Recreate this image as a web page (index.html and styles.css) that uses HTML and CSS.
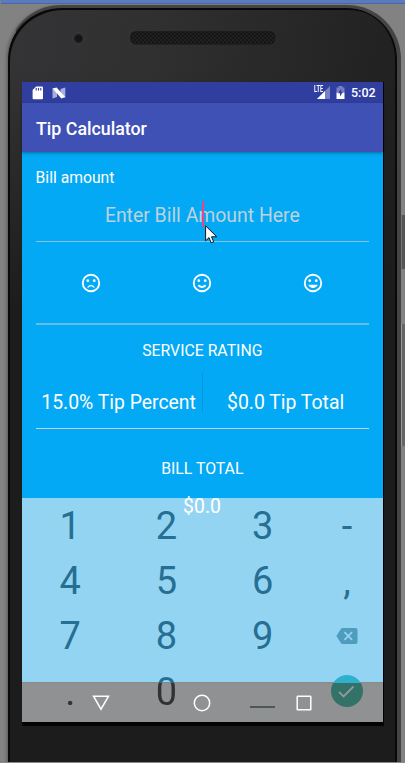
FILE: index.html
```html
<!DOCTYPE html>
<html lang="en">
<head>
<meta charset="utf-8">
<title>Tip Calculator</title>
<link rel="stylesheet" href="styles.css">
</head>
<body>
<div class="desktop">
  <div class="window-edge"></div>
  <div class="side-button power"></div>
  <div class="side-button volume"></div>
  <div class="phone">
    <div class="bezel">
      <span class="camera"></span>
      <svg class="speaker" width="146" height="14" viewBox="0 0 146 14">
        <defs><pattern id="mesh" width="4" height="4" patternUnits="userSpaceOnUse"><rect width="4" height="4" fill="#212121"/><circle cx="1" cy="1" r=".8" fill="#050505"/><circle cx="3" cy="3" r=".8" fill="#050505"/></pattern></defs>
        <rect x=".8" y=".8" width="144" height="12" rx="5" fill="url(#mesh)" stroke="#181818" stroke-width="1.2"/>
      </svg>
    </div>
    <main class="screen">
      <header class="status">
        <svg width="12" height="14" viewBox="0 0 12 14"><path d="M4.2.5H10Q11 .5 11 1.5V12.2Q11 13.3 10 13.3H1.6Q.6 13.3 .6 12.2V4Z" fill="#fff"/><path d="M4.2 2v2.4M6.5 2v2.4M8.8 2v2.4" stroke="#303f9f" stroke-width="1.1"/></svg>
        <svg class="nougat" width="14" height="12" viewBox="0 0 14 12"><path d="M.5 1 5 5v5L.5 11.5ZM13.3.5V11L8.5 7V2Z" fill="#a9afd9"/><path d="M.6 1.6 4.6.4 13.2 10 9.4 11.5Z" fill="#fff"/></svg>
        <span class="spacer"></span>
        <span class="signal"><svg width="13" height="13" viewBox="0 0 13 13"><path d="M13 0V13H0Z" fill="#7681c3"/><path d="M8 5V13H0Z" fill="#fff"/></svg><span class="lte">LTE</span></span>
        <svg class="battery" width="9" height="13" viewBox="0 0 9 13"><path d="M.5 1.5H2.5V0H6.5V1.5H8.5V7H.5Z" fill="#7681c3"/><path d="M.5 6.7h8V13h-8Z" fill="#fff"/><path d="M5.2 2.5 2 7.3h2v3.2l3-4.8H5.2Z" fill="#303f9f"/></svg>
        <span class="clock">5:02</span>
      </header>
      <div class="appbar"><h1>Tip Calculator</h1></div>
      <section class="content">
        <div class="label">Bill amount</div>
        <div class="amount"><span>Enter Bill Amount Here</span><i class="caret"></i>
          <svg class="pointer" width="13" height="19" viewBox="0 0 13 19"><path d="M.6.8V15.8L4 12.6 6.2 17.8 8.7 16.8 6.5 11.8H11.7Z" fill="#fff" stroke="#111" stroke-width="1"/></svg>
        </div>
        <div class="faces">
          <svg viewBox="0 0 24 24"><circle cx="12" cy="12" r="9" /><path d="M7.6 16.8Q12 11.2 16.4 16.8H14.6Q12 14.4 9.4 16.8Z" class="fill"/><circle cx="8.5" cy="9.5" r="1.5" class="fill"/><circle cx="15.5" cy="9.5" r="1.5" class="fill"/></svg>
          <svg viewBox="0 0 24 24"><circle cx="12" cy="12" r="9"/><path d="M8 14.5Q12 18.2 16 14.5"/><circle cx="8.5" cy="9.5" r="1.5" class="fill"/><circle cx="15.5" cy="9.5" r="1.5" class="fill"/></svg>
          <svg viewBox="0 0 24 24"><circle cx="12" cy="12" r="9"/><path d="M6.9 14H17.1A5.5 5.5 0 0 1 6.9 14Z" class="fill"/><circle cx="8.5" cy="9.5" r="1.5" class="fill"/><circle cx="15.5" cy="9.5" r="1.5" class="fill"/></svg>
        </div>
        <div class="caption rating">SERVICE RATING</div>
        <div class="tips"><span>15.0% Tip Percent</span><i class="divider"></i><span>$0.0 Tip Total</span></div>
        <div class="caption total">BILL TOTAL</div>
      </section>
      <div class="keyboard">
        <span>1</span><span>2</span><span>3</span><span>-</span>
        <span>4</span><span>5</span><span>6</span><span>,</span>
        <span>7</span><span>8</span><span>9</span>
        <span class="icon"><svg width="22" height="16" viewBox="0 0 22 16"><path d="M6.5 0H19.5Q21.5 0 21.5 2V14Q21.5 16 19.5 16H6.5Q5.5 16 5 15.2L.3 8 5 .8Q5.5 0 6.5 0Z" fill="#4f9cbe"/><path d="M8.5 4.2l7.6 7.6M16.1 4.2 8.5 11.8" stroke="#93d4f2" stroke-width="1.8"/></svg></span>
        <span class="dot">.</span><span class="zero">0</span><span class="space icon"><i></i></span>
        <span class="icon"><b class="done"><svg width="17" height="13" viewBox="0 0 17 13"><path d="M1 6.8 5.6 11.4 15.5 1.5" fill="none" stroke="#969999" stroke-width="1.8"/></svg></b></span>
      </div>
      <div class="sum">$0.0</div>
      <nav class="navbar">
        <svg width="18" height="18" viewBox="0 0 18 18"><path d="M1.5 2.2H16.5L9 15.2Z"/></svg>
        <svg width="18" height="18" viewBox="0 0 18 18"><circle cx="9" cy="9" r="7.7"/></svg>
        <svg width="18" height="18" viewBox="0 0 18 18"><rect x="2.2" y="2.2" width="13.6" height="13.6" rx=".5"/></svg>
      </nav>
    </main>
  </div>
</div>
</body>
</html>
```
FILE: styles.css
```css
* { box-sizing: border-box; }
body { margin: 0; font-family: Roboto, sans-serif; color: #fff; }
.desktop { position: relative; width: 405px; height: 763px; overflow: hidden; background: #828282; border-bottom: 1px solid #8a8a8a; }
.window-edge { height: 4px; margin-left: 1px; background: #5a7abd; border-bottom: 1px solid #4967a8; }
.side-button { position: absolute; right: 0; width: 4px; background: #555; border-left: 1px solid #777; }
.power { top: 215px; height: 54px; }
.volume { top: 324px; height: 122px; border-left-color: #999; background: #666; }
.phone {
  position: relative; height: 790px; margin: 1px 4px 0 7px; padding: 0 14px 0 11px;
  border: solid #444; border-width: 3px 4px 0 1px; border-radius: 54px 54px 0 0;
  border-left-color: #666;
  background: linear-gradient(180deg, transparent 60px, #1c1c1c 300px), linear-gradient(100deg, #343436 0, #303031 28%, #292929 50%, #202020 80%);
  box-shadow: inset 2px 2px 0 #090909, inset -2px 0 0 #090909, -1px 0 1px #707070, -2px 0 2px #777;
}
.bezel { display: flex; align-items: center; height: 74px; padding: 0 0 14px 53px; }
.camera { width: 13px; height: 13px; border-radius: 50%; border: 1px solid #3c3c3d; background: radial-gradient(circle at 50% 50%, #141416 0 3px, #2b2b2d 4.5px); }
.speaker { margin-left: 45px; }
.screen { position: relative; display: flex; flex-direction: column; width: 361px; height: 644px; margin-left: 3px; background: #03a9f4; border-bottom: 4px solid #030303; box-shadow: 1px 0 0 #000; }
.status { display: flex; align-items: center; height: 21px; padding: 0 7px 0 10px; background: #303f9f; }
.nougat { margin-left: 7.5px; }
.spacer { flex: 1; }
.signal { position: relative; display: flex; width: 17px; justify-content: flex-end; }
.lte { position: absolute; left: 1px; top: 0; font: 700 8.5px/7px Roboto, sans-serif; transform: scaleX(.66); transform-origin: left; }
.battery { margin-left: 6px; }
.clock { width: 25px; margin-left: 6px; font-size: 12.5px; font-weight: 500; line-height: 21px; white-space: nowrap; }
.appbar { position: relative; height: 49px; padding-left: 14px; background: #3f51b5; box-shadow: 0 1px 3px rgba(0,0,0,.35); }
h1 { margin: 0; font-size: 17.8px; font-weight: 500; line-height: 51px; }
.content { padding: 15px 14px 0 13.6px; }
.label { height: 21px; font-size: 15.7px; line-height: 21px; }
.amount { position: relative; height: 54px; border-bottom: 1px solid #83c4e3; text-align: center; font-size: 19.4px; line-height: 56px; color: #bfd1dc; }
.caret { position: absolute; left: 166.4px; top: 13px; width: 2px; height: 26px; background: #e9458c; }
.pointer { position: absolute; left: 169.4px; top: 37px; }
.faces { display: grid; grid-template-columns: 1fr 1fr 1fr; place-items: center; height: 83px; border-bottom: 2px solid #67bce4; }
.faces svg { width: 22px; height: 22px; fill: none; stroke: #fff; stroke-width: 2; }
.faces .fill { fill: #fff; stroke: none; }
.caption { text-align: center; font-size: 15.8px; line-height: 20px; }
.rating { margin-top: 16px; }
.tips { display: grid; grid-template-columns: 166px 1px 166px; height: 68px; border-bottom: 1px solid #c4d3dc; text-align: center; font-size: 19.4px; line-height: 84px; white-space: nowrap; }
.divider { height: 40px; margin-top: 12px; background: #0498db; }
.total { margin-top: 30px; }
.sum { position: absolute; top: 413px; left: 0; width: 360px; text-align: center; font-size: 19.4px; line-height: 24px; }
.keyboard { position: absolute; left: 0; top: 416px; width: 361px; height: 224px; display: grid; grid-template-columns: 96.3px 96.3px 96.3px 72px; grid-auto-rows: 55.2px; background: linear-gradient(#93d4f2 184px, #868889 184px, #909192 186px, #909192 100%); color: #266f92; font-size: 38px; line-height: 53px; }
.keyboard span { display: flex; align-items: center; justify-content: center; padding-top: 2px; }
.keyboard .icon { padding-top: 0; }
.keyboard .dot { color: #303234; }
.keyboard .zero { background: linear-gradient(#266f92 18.5px, #303234 18.5px); -webkit-background-clip: text; background-clip: text; color: transparent; }
.space i { width: 25px; height: 2px; margin-top: 31px; background: #4e565a; }
.done { display: flex; align-items: center; justify-content: center; width: 32px; height: 32px; border-radius: 50%; background: linear-gradient(#2fb1cd 8px, #327269 8px); }
.navbar { position: absolute; left: 0; bottom: 0; width: 361px; height: 39px; display: flex; align-items: center; justify-content: center; gap: 83.5px; padding-right: 1px; }
.navbar svg { fill: none; stroke: #fff; stroke-width: 1.5; }
```
